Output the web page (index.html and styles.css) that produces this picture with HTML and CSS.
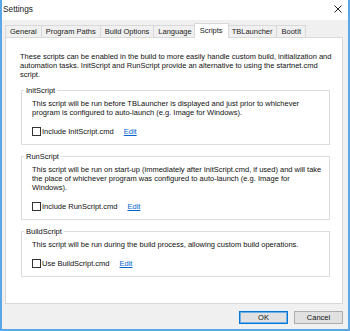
FILE: index.html
```html
<!DOCTYPE html>
<html lang="en">
<head>
  <meta charset="UTF-8">
  <title>Settings</title>
  <link rel="stylesheet" href="styles.css">
</head>
<body>
  <div class="window">
    <div class="titlebar">
      <span class="title">Settings</span>
      <svg class="close" width="8" height="8" viewBox="0 0 8 8">
        <path d="M0.5 0.5 L7.5 7.5 M7.5 0.5 L0.5 7.5" stroke="#222" stroke-width="1"/>
      </svg>
    </div>
    <div class="content">
      <div class="tabs">
        <div class="tab">General</div>
        <div class="tab">Program Paths</div>
        <div class="tab">Build Options</div>
        <div class="tab">Language</div>
        <div class="tab active">Scripts</div>
        <div class="tab">TBLauncher</div>
        <div class="tab">BootIt</div>
      </div>
      <div class="panel">
        <p class="intro">These scripts can be enabled in the build to more easily handle custom build, initialization and<br>automation tasks. InitScript and RunScript provide an alternative to using the startnet.cmd<br>script.</p>

        <fieldset class="group">
          <legend>InitScript</legend>
          <p>This script will be run before TBLauncher is displayed and just prior to whichever<br>program is configured to auto-launch (e.g. Image for Windows).</p>
          <div class="option">
            <span class="check"></span>
            <span class="label">Include InitScript.cmd</span>
            <a class="edit" href="#">Edit</a>
          </div>
        </fieldset>

        <fieldset class="group">
          <legend>RunScript</legend>
          <p>This script will be run on start-up (immediately after InitScript.cmd, if used) and will take<br>the place of whichever program was configured to auto-launch (e.g. Image for<br>Windows).</p>
          <div class="option">
            <span class="check"></span>
            <span class="label">Include RunScript.cmd</span>
            <a class="edit" href="#">Edit</a>
          </div>
        </fieldset>

        <fieldset class="group">
          <legend>BuildScript</legend>
          <p>This script will be run during the build process, allowing custom build operations.</p>
          <div class="option">
            <span class="check"></span>
            <span class="label">Use BuildScript.cmd</span>
            <a class="edit" href="#">Edit</a>
          </div>
        </fieldset>
      </div>
      <div class="buttons">
        <button class="btn default">OK</button>
        <button class="btn">Cancel</button>
      </div>
    </div>
  </div>
</body>
</html>
```

FILE: styles.css
```css
* {
  padding: 0;
  margin: 0;
  box-sizing: border-box;
}

body {
  width: 350px;
  height: 331px;
  font-family: 'Liberation Sans', Arial, sans-serif;
  font-size: 7.5px;
  color: #111;
  background: #fff;
}

.window {
  width: 350px;
  height: 331px;
  border: 2px solid #5aa6e6;
  border-top: none;
  display: flex;
  flex-direction: column;
}

.titlebar {
  height: 20px;
  background: #fff;
  display: flex;
  align-items: center;
  justify-content: space-between;
  padding: 0 6px 2px 1px;
}

.title {
  font-size: 8.3px;
  color: #222;
}

.content {
  flex: 1;
  background: #f0f0f0;
  padding: 3px 5px 0 3px;
  display: flex;
  flex-direction: column;
}

/* tab strip */
.tabs {
  display: flex;
  height: 14px;
  align-items: flex-end;
  position: relative;
  z-index: 1;
}

.tab {
  height: 12px;
  line-height: 11px;
  padding: 0 4px;
  border: 1px solid #d9d9d9;
  border-bottom: none;
  margin-right: -1px;
  background: #f0f0f0;
  color: #222;
  white-space: nowrap;
}

.tab.active {
  height: 15px;
  line-height: 13px;
  background: #fff;
  margin: 0 -1px 0 -2px;
  padding: 0 5px;
  position: relative;
  top: 1px;
}

.tab.active + .tab {
  margin-left: -1px;
}

.panel {
  height: 267px;
  background: #fff;
  border: 1px solid #d9d9d9;
  padding: 14px 7px 0 14px;
}

.panel p {
  line-height: 9px;
  white-space: nowrap;
}

.intro {
  margin-bottom: 7px;
}

/* group boxes */
.group {
  border: 1px solid #dcdcdc;
  padding: 4px 6px 8px 10px;
  margin: 0 5px 7px 1px;
}

.group legend {
  padding: 0 2px;
  margin-left: -8px;
  line-height: 9px;
}

.option {
  display: flex;
  align-items: center;
  margin-top: 10px;
  height: 9px;
}

.check {
  width: 9px;
  height: 9px;
  border: 1px solid #333;
  background: #fff;
  margin-right: 1px;
}

.label {
  margin-right: 10px;
  white-space: nowrap;
}

.edit {
  color: #0066cc;
  text-decoration: underline;
}

/* dialog buttons */
.buttons {
  display: flex;
  justify-content: flex-end;
  gap: 6px;
  padding: 7px 0 0 0;
}

.btn {
  width: 49px;
  height: 13px;
  font-family: inherit;
  font-size: 7.5px;
  color: #111;
  background: #e1e1e1;
  border: 1px solid #adadad;
}

.btn.default {
  border: 1px solid #0078d7;
  box-shadow: inset 0 0 0 1px #6fb0ea;
}
```
